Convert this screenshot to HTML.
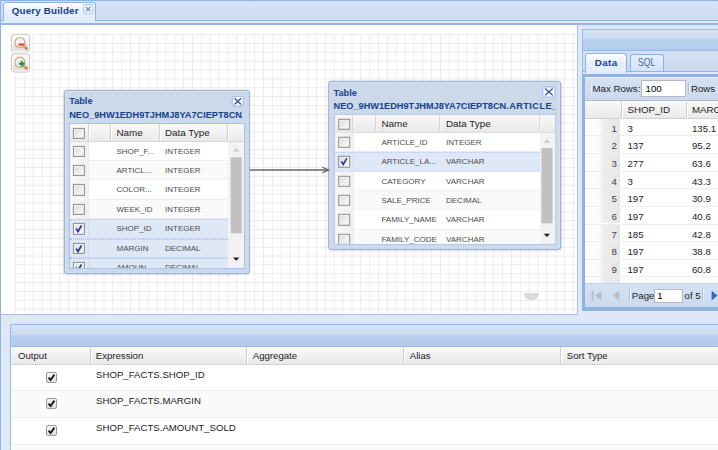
<!DOCTYPE html>
<html>
<head>
<meta charset="utf-8">
<title>Query Builder</title>
<style>
html,body{margin:0;padding:0;}
body{width:718px;height:450px;overflow:hidden;background:#dfe8f6;position:relative;font-family:"Liberation Sans",Arial,sans-serif;font-size:9.7px;color:#333;}
.abs{position:absolute;}
div{box-sizing:border-box;}
span{white-space:nowrap;}
/* top tab strip */
#strip{left:0;top:0;width:718px;height:25px;background:linear-gradient(#d5e2f4,#ccdbef);border-top:1px solid #8db2e3;}
#stripline{left:0;top:20.3px;width:718px;height:1px;background:#8db2e3;}
#stripspacer{left:0;top:21.3px;width:718px;height:2px;background:#deecfd;}
#stripbottom{left:0;top:23.1px;width:718px;height:1.7px;background:#94b6e5;}
#maintab{left:3.4px;top:2.1px;width:93px;height:19.3px;border:1px solid #8db2e3;border-bottom:none;border-radius:3px 3px 0 0;background:linear-gradient(#ffffff,#e6f0fd 45%,#deecfd);}
#maintab .t{left:7.3px;top:2.4px;font-weight:bold;font-size:9.8px;letter-spacing:0.17px;color:#15428b;line-height:12px;}
#leftborder{left:0;top:0;width:1.4px;height:450px;background:#8db2e3;}
/* canvas */
#canvas{left:1.4px;top:24.8px;width:576.5px;height:289.8px;background:#fff;border-right:1px solid #a3c1ea;border-bottom:1px solid #a3c1ea;}
.zbtn{left:11.1px;width:18.3px;height:18.4px;border:1px solid #bdbdbd;border-radius:3px;background:linear-gradient(#f7f7f7 0,#f3f3f3 55%,#dfdfdf 56%,#e3e3e3 100%);box-shadow:0 0 0 1px #fff;}
/* table windows */
.win{background:#ccd9ea;border:1px solid #98aed1;border-radius:3px;box-shadow:inset 0 0 0 1px #d9e3f1,0 1px 2px rgba(0,0,0,.13);}
.win .ttl{left:4.3px;font-weight:bold;font-size:9.2px;color:#15428b;line-height:12px;overflow:hidden;}
.win .close{width:12.4px;height:11px;background:#fff;border:1px solid #a6c2ea;border-radius:2px;}
.tg{background:#fff;border:1px solid #a0bee9;overflow:hidden;}
.tg .hd{left:0;top:0;height:17.7px;background:linear-gradient(#f9f9f9,#e9e9e9);border-bottom:1px solid #d0d0d0;}
.tg .hd span{position:absolute;top:0;line-height:17.4px;font-size:9.85px;color:#222;}
.tg .sep{top:0;width:2px;height:17px;border-left:1px solid #d0d0d0;border-right:1px solid #fff;}
.row{left:0;height:19.4px;border-bottom:1px solid #ededed;border-top:1px solid #fff;}
.row.alt{background:#fafafa;border-top-color:#fafafa;}
.row.sel{background:#dfe8f6;border-top:1px dotted #aac0ea;border-bottom:1px dotted #aac0ea;}
.row span{position:absolute;top:0;line-height:17.6px;font-size:8px;color:#4c4c4c;}
.row .ckc{left:0;top:-1px;width:19.4px;height:19.4px;background:linear-gradient(to right,#f8f8f8,#f0f0f0);border-right:1px solid #ececec;}
.row.sel .ckc{background:transparent;border-right-color:#d3dcec;}
.cb{left:3.4px;top:4px;width:11.4px;height:11.4px;border:1px solid #8c8c8c;background:linear-gradient(135deg,#cfcfcf,#ececec 50%,#fdfdfd);box-shadow:inset 0 0 0 1.5px #f1f1f1;}
.hd .cb{top:4px;}
.cb svg{position:absolute;left:0;top:0;}
.sb{background:#f2f2f2;}
.thumb{background:#c1c1c1;}
/* right panel */
.phd{background:linear-gradient(#d5e3f5 0,#cadbf3 45%,#b9d0ef 48%,#b2cbed 100%);border:1px solid #99bbe8;}
.tab2{border:1px solid #8db2e3;border-bottom:none;border-radius:3px 3px 0 0;}
.tab2 span{position:absolute;line-height:12px;}
.tbar{background:linear-gradient(#d6e2f3,#cbd9ee);}
.tbar span{position:absolute;line-height:12px;font-size:9.7px;color:#222;}
.inp{background:#fff;border:1px solid #b5b8c8;}
.inp span{left:2.5px;top:1.5px;color:#000;}
.tsep{width:2px;border-left:1px solid #9dbdea;border-right:1px solid #f4f8fd;}
.ghd{background:linear-gradient(#f9f9f9,#e9e9e9);border-bottom:1px solid #d0d0d0;}
.ghd span{position:absolute;top:0;line-height:18px;font-size:9.7px;color:#222;}
.gr{left:0;width:200px;height:17.64px;border-bottom:1px solid #ededed;background:#fff;}
.gr .n{left:0;top:0;width:35.3px;height:16.6px;background:linear-gradient(to right,#fff 0,#fbfbfb 40%,#eeeeee 50%,#e6e6e6 100%);}
.gr span{position:absolute;top:0;line-height:19px;font-size:9.7px;color:#222;}
/* bottom panel */
.brow{left:0;width:710px;height:26.55px;border-bottom:1px solid #ededed;background:#fff;}
.brow.alt{background:#fafafa;}
.brow span{position:absolute;left:85.1px;top:3.9px;line-height:12px;font-size:9.63px;color:#222;}
.ccb{left:35.2px;top:7px;width:10.6px;height:10.8px;border:1px solid #9a9a9a;border-radius:2px;background:linear-gradient(#f6f6f6,#dedede);}

</style>
</head>
<body>
<!-- top tab strip -->
<div id="strip" class="abs"></div>
<div id="stripline" class="abs"></div>
<div id="stripspacer" class="abs"></div>
<div id="stripbottom" class="abs"></div>
<div id="maintab" class="abs"><span class="abs t">Query Builder</span>
 <svg class="abs" style="left:79px;top:1.2px" width="11" height="11" viewBox="0 0 11 11"><rect x="0.5" y="0.5" width="9.4" height="9.4" rx="2" fill="#eef4fd" stroke="#a9c4ec"/><path d="M3 3 L7.4 7.4 M7.4 3 L3 7.4" stroke="#6d8fc4" stroke-width="1.3"/></svg>
</div>
<!-- canvas -->
<div id="canvas" class="abs"></div>
<svg class="abs" style="left:0;top:0" width="578" height="315" viewBox="0 0 578 315">
<g stroke="#ececec" stroke-width="1">
<line x1="15.40" y1="74.20" x2="15.40" y2="314.3"/>
<line x1="24.26" y1="74.20" x2="24.26" y2="314.3"/>
<line x1="33.11" y1="34.10" x2="33.11" y2="314.3"/>
<line x1="41.97" y1="34.10" x2="41.97" y2="314.3"/>
<line x1="50.83" y1="34.10" x2="50.83" y2="314.3"/>
<line x1="59.68" y1="34.10" x2="59.68" y2="314.3"/>
<line x1="68.54" y1="34.10" x2="68.54" y2="314.3"/>
<line x1="77.40" y1="34.10" x2="77.40" y2="314.3"/>
<line x1="86.26" y1="34.10" x2="86.26" y2="314.3"/>
<line x1="95.11" y1="34.10" x2="95.11" y2="314.3"/>
<line x1="103.97" y1="34.10" x2="103.97" y2="314.3"/>
<line x1="112.83" y1="34.10" x2="112.83" y2="314.3"/>
<line x1="121.68" y1="34.10" x2="121.68" y2="314.3"/>
<line x1="130.54" y1="34.10" x2="130.54" y2="314.3"/>
<line x1="139.40" y1="34.10" x2="139.40" y2="314.3"/>
<line x1="148.25" y1="34.10" x2="148.25" y2="314.3"/>
<line x1="157.11" y1="34.10" x2="157.11" y2="314.3"/>
<line x1="165.97" y1="34.10" x2="165.97" y2="314.3"/>
<line x1="174.83" y1="34.10" x2="174.83" y2="314.3"/>
<line x1="183.68" y1="34.10" x2="183.68" y2="314.3"/>
<line x1="192.54" y1="34.10" x2="192.54" y2="314.3"/>
<line x1="201.40" y1="34.10" x2="201.40" y2="314.3"/>
<line x1="210.25" y1="34.10" x2="210.25" y2="314.3"/>
<line x1="219.11" y1="34.10" x2="219.11" y2="314.3"/>
<line x1="227.97" y1="34.10" x2="227.97" y2="314.3"/>
<line x1="236.82" y1="34.10" x2="236.82" y2="314.3"/>
<line x1="245.68" y1="34.10" x2="245.68" y2="314.3"/>
<line x1="254.54" y1="34.10" x2="254.54" y2="314.3"/>
<line x1="263.40" y1="34.10" x2="263.40" y2="314.3"/>
<line x1="272.25" y1="34.10" x2="272.25" y2="314.3"/>
<line x1="281.11" y1="34.10" x2="281.11" y2="314.3"/>
<line x1="289.97" y1="34.10" x2="289.97" y2="314.3"/>
<line x1="298.82" y1="34.10" x2="298.82" y2="314.3"/>
<line x1="307.68" y1="34.10" x2="307.68" y2="314.3"/>
<line x1="316.54" y1="34.10" x2="316.54" y2="314.3"/>
<line x1="325.39" y1="34.10" x2="325.39" y2="314.3"/>
<line x1="334.25" y1="34.10" x2="334.25" y2="314.3"/>
<line x1="343.11" y1="34.10" x2="343.11" y2="314.3"/>
<line x1="351.97" y1="34.10" x2="351.97" y2="314.3"/>
<line x1="360.82" y1="34.10" x2="360.82" y2="314.3"/>
<line x1="369.68" y1="34.10" x2="369.68" y2="314.3"/>
<line x1="378.54" y1="34.10" x2="378.54" y2="314.3"/>
<line x1="387.39" y1="34.10" x2="387.39" y2="314.3"/>
<line x1="396.25" y1="34.10" x2="396.25" y2="314.3"/>
<line x1="405.11" y1="34.10" x2="405.11" y2="314.3"/>
<line x1="413.96" y1="34.10" x2="413.96" y2="314.3"/>
<line x1="422.82" y1="34.10" x2="422.82" y2="314.3"/>
<line x1="431.68" y1="34.10" x2="431.68" y2="314.3"/>
<line x1="440.54" y1="34.10" x2="440.54" y2="314.3"/>
<line x1="449.39" y1="34.10" x2="449.39" y2="314.3"/>
<line x1="458.25" y1="34.10" x2="458.25" y2="314.3"/>
<line x1="467.11" y1="34.10" x2="467.11" y2="314.3"/>
<line x1="475.96" y1="34.10" x2="475.96" y2="314.3"/>
<line x1="484.82" y1="34.10" x2="484.82" y2="314.3"/>
<line x1="493.68" y1="34.10" x2="493.68" y2="314.3"/>
<line x1="502.53" y1="34.10" x2="502.53" y2="314.3"/>
<line x1="511.39" y1="34.10" x2="511.39" y2="314.3"/>
<line x1="520.25" y1="34.10" x2="520.25" y2="314.3"/>
<line x1="529.11" y1="34.10" x2="529.11" y2="314.3"/>
<line x1="537.96" y1="34.10" x2="537.96" y2="314.3"/>
<line x1="546.82" y1="34.10" x2="546.82" y2="314.3"/>
<line x1="555.68" y1="34.10" x2="555.68" y2="314.3"/>
<line x1="564.53" y1="34.10" x2="564.53" y2="314.3"/>
<line x1="573.39" y1="34.10" x2="573.39" y2="314.3"/>
<line x1="33.00" y1="34.60" x2="577.0" y2="34.60"/>
<line x1="33.00" y1="43.46" x2="577.0" y2="43.46"/>
<line x1="33.00" y1="52.31" x2="577.0" y2="52.31"/>
<line x1="33.00" y1="61.17" x2="577.0" y2="61.17"/>
<line x1="33.00" y1="70.03" x2="577.0" y2="70.03"/>
<line x1="14.40" y1="78.88" x2="577.0" y2="78.88"/>
<line x1="14.40" y1="87.74" x2="577.0" y2="87.74"/>
<line x1="14.40" y1="96.60" x2="577.0" y2="96.60"/>
<line x1="14.40" y1="105.46" x2="577.0" y2="105.46"/>
<line x1="14.40" y1="114.31" x2="577.0" y2="114.31"/>
<line x1="14.40" y1="123.17" x2="577.0" y2="123.17"/>
<line x1="14.40" y1="132.03" x2="577.0" y2="132.03"/>
<line x1="14.40" y1="140.88" x2="577.0" y2="140.88"/>
<line x1="14.40" y1="149.74" x2="577.0" y2="149.74"/>
<line x1="14.40" y1="158.60" x2="577.0" y2="158.60"/>
<line x1="14.40" y1="167.45" x2="577.0" y2="167.45"/>
<line x1="14.40" y1="176.31" x2="577.0" y2="176.31"/>
<line x1="14.40" y1="185.17" x2="577.0" y2="185.17"/>
<line x1="14.40" y1="194.03" x2="577.0" y2="194.03"/>
<line x1="14.40" y1="202.88" x2="577.0" y2="202.88"/>
<line x1="14.40" y1="211.74" x2="577.0" y2="211.74"/>
<line x1="14.40" y1="220.60" x2="577.0" y2="220.60"/>
<line x1="14.40" y1="229.45" x2="577.0" y2="229.45"/>
<line x1="14.40" y1="238.31" x2="577.0" y2="238.31"/>
<line x1="14.40" y1="247.17" x2="577.0" y2="247.17"/>
<line x1="14.40" y1="256.02" x2="577.0" y2="256.02"/>
<line x1="14.40" y1="264.88" x2="577.0" y2="264.88"/>
<line x1="14.40" y1="273.74" x2="577.0" y2="273.74"/>
<line x1="14.40" y1="282.60" x2="577.0" y2="282.60"/>
<line x1="14.40" y1="291.45" x2="577.0" y2="291.45"/>
<line x1="14.40" y1="300.31" x2="577.0" y2="300.31"/>
<line x1="14.40" y1="309.17" x2="577.0" y2="309.17"/>
</g></svg>
<div id="leftborder" class="abs"></div>
<!-- zoom buttons -->
<svg class="abs" style="left:9px;top:32px" width="23" height="44" viewBox="0 0 23 44">
 <defs><linearGradient id="zb" x1="0" y1="0" x2="0" y2="1"><stop offset="0" stop-color="#f8f8f8"/><stop offset="0.61" stop-color="#f2f2f2"/><stop offset="0.62" stop-color="#dddddd"/><stop offset="1" stop-color="#e4e4e4"/></linearGradient></defs>
<g transform="translate(0 0)">
 <rect x="0.8" y="0.8" width="21" height="21" rx="4" fill="#fff"/>
 <rect x="2.3" y="2.3" width="18.1" height="18.1" rx="3" fill="#fff" stroke="#c2c2c2" stroke-width="1"/>
 <rect x="3.6" y="3.6" width="15.5" height="15.5" rx="1.5" fill="url(#zb)"/>
 <circle cx="10.9" cy="10.5" r="5" fill="#eef3f9" stroke="#d4a870" stroke-width="1.2"/>
 <path d="M14.6 14.4 L17.2 16.4" stroke="#d9b262" stroke-width="2.6" stroke-linecap="round"/>
 <path d="M16.8 16.1 L17.5 16.7" stroke="#b9873a" stroke-width="2.4" stroke-linecap="round"/>
 <rect x="9.5" y="11.3" width="6.4" height="2.5" fill="#e63c46" stroke="#f4a0a6" stroke-width="0.6"/>
</g>
<g transform="translate(0 19.7)">
 <rect x="0.8" y="0.8" width="21" height="21" rx="4" fill="#fff"/>
 <rect x="2.3" y="2.3" width="18.1" height="18.1" rx="3" fill="#fff" stroke="#c2c2c2" stroke-width="1"/>
 <rect x="3.6" y="3.6" width="15.5" height="15.5" rx="1.5" fill="url(#zb)"/>
 <circle cx="10.9" cy="10.5" r="5" fill="#eef3f9" stroke="#d4a870" stroke-width="1.2"/>
 <path d="M14.6 14.4 L17.2 16.4" stroke="#d9b262" stroke-width="2.6" stroke-linecap="round"/>
 <path d="M16.8 16.1 L17.5 16.7" stroke="#b9873a" stroke-width="2.4" stroke-linecap="round"/>
 <path d="M12.9 9.1 V15.1 M9.9 12.1 H15.9" stroke="#4aa35a" stroke-width="2.4"/><path d="M12.9 9.9 V14.3 M10.7 12.1 H15.1" stroke="#2f8a40" stroke-width="1.1"/>
</g>
</svg>

<!-- table windows -->
<div class="abs win" style="left:63px;top:89px;width:186.2px;height:183.9px;transform:translate(0.90px,0.90px)">
 <span class="abs ttl" style="top:4.2px">Table</span>
 <span class="abs ttl" style="top:18.2px;width:174.2px">NEO_9HW1EDH9TJHMJ8YA7CIEPT8CN.SHOP_FACTS</span>
 <svg class="abs" style="left:166px;top:5px" width="16" height="14" viewBox="0 0 16 14"><g transform="translate(0.70 0.00)"><rect x="0.6" y="0.6" width="11.20" height="9.60" rx="1.8" fill="#f7faff" stroke="#a3bfea" stroke-width="1.2"/><path d="M2.90 2.30 L9.50 8.50 M9.50 2.30 L2.90 8.50" stroke="#3b55a8" stroke-width="1.35"/></g></svg>
 <div class="abs tg" style="left:4px;top:32px;width:175.7px;height:145.6px">
  <div class="abs hd" style="width:173.7px;height:17.6px">
   <div class="abs cb"></div>
   <div class="abs sep" style="left:18.0px"></div>
   <div class="abs sep" style="left:40.3px"></div>
   <div class="abs sep" style="left:89.1px"></div>
   <div class="abs sep" style="left:157.4px"></div>
   <span style="left:46.6px">Name</span><span style="left:95.1px">Data Type</span>
  </div>
  <div class="abs row" style="top:17.60px;width:158.4px;height:19.40px">
   <div class="abs ckc"><div class="abs cb"></div></div><span style="left:46.6px">SHOP_F...</span><span style="left:95.1px">INTEGER</span>
  </div>
  <div class="abs row alt" style="top:37.00px;width:158.4px;height:19.40px">
   <div class="abs ckc"><div class="abs cb"></div></div><span style="left:46.6px">ARTICL...</span><span style="left:95.1px">INTEGER</span>
  </div>
  <div class="abs row" style="top:56.40px;width:158.4px;height:19.40px">
   <div class="abs ckc"><div class="abs cb"></div></div><span style="left:46.6px">COLOR...</span><span style="left:95.1px">INTEGER</span>
  </div>
  <div class="abs row alt" style="top:75.80px;width:158.4px;height:19.40px">
   <div class="abs ckc"><div class="abs cb"></div></div><span style="left:46.6px">WEEK_ID</span><span style="left:95.1px">INTEGER</span>
  </div>
  <div class="abs row sel" style="top:95.20px;width:158.4px;height:19.40px">
   <div class="abs ckc"><div class="abs cb"><svg width="10" height="10" viewBox="0 0 10 10"><path d="M2.2 4.6 L4.1 7.6 L7.6 1.6" fill="none" stroke="#26399a" stroke-width="1.7"/></svg></div></div><span style="left:46.6px">SHOP_ID</span><span style="left:95.1px">INTEGER</span>
  </div>
  <div class="abs row sel" style="top:114.60px;width:158.4px;height:19.40px">
   <div class="abs ckc"><div class="abs cb"><svg width="10" height="10" viewBox="0 0 10 10"><path d="M2.2 4.6 L4.1 7.6 L7.6 1.6" fill="none" stroke="#26399a" stroke-width="1.7"/></svg></div></div><span style="left:46.6px">MARGIN</span><span style="left:95.1px">DECIMAL</span>
  </div>
  <div class="abs row sel" style="top:134.00px;width:158.4px;height:19.40px">
   <div class="abs ckc"><div class="abs cb"><svg width="10" height="10" viewBox="0 0 10 10"><path d="M2.2 4.6 L4.1 7.6 L7.6 1.6" fill="none" stroke="#26399a" stroke-width="1.7"/></svg></div></div><span style="left:46.6px">AMOUN...</span><span style="left:95.1px">DECIMAL</span>
  </div>
  <div class="abs sb" style="left:158.4px;top:17.6px;width:16.3px;height:145.6px"></div>
  <svg class="abs" style="left:158px;top:17px" width="18" height="146" viewBox="0 0 18 146"><g transform="translate(-227.90 -140.90)">
   <rect x="230.70" y="157.30" width="11.00" height="76.00" fill="#c1c1c1"/>
   <path d="M236.20 148.30 l3.1 3.2 h-6.2 Z" fill="#c6c6c6"/>
   <path d="M236.20 260.70 l3.1 -3.2 h-6.2 Z" fill="#1a1a1a"/>
  </g></svg>
 </div>
</div>
<div class="abs win" style="left:328px;top:80px;width:232.5px;height:169.0px;transform:translate(0.20px,0.80px)">
 <span class="abs ttl" style="top:5.0px">Table</span>
 <span class="abs ttl" style="top:18.1px;width:222.2px">NEO_9HW1EDH9TJHMJ8YA7CIEPT8CN<span style="letter-spacing:0.42px">.ARTICLE_LOOKUP</span></span>
 <svg class="abs" style="left:213px;top:4px" width="16" height="14" viewBox="0 0 16 14"><g transform="translate(0.00 0.40)"><rect x="0.6" y="0.6" width="12.20" height="10.20" rx="1.8" fill="#f7faff" stroke="#a3bfea" stroke-width="1.2"/><path d="M2.90 2.30 L10.50 9.10 M10.50 2.30 L2.90 9.10" stroke="#3b55a8" stroke-width="1.35"/></g></svg>
 <div class="abs tg" style="left:5px;top:32px;width:221.6px;height:131.0px">
  <div class="abs hd" style="width:219.6px;height:17.9px">
   <div class="abs cb"></div>
   <div class="abs sep" style="left:17.4px"></div>
   <div class="abs sep" style="left:39.8px"></div>
   <div class="abs sep" style="left:103.9px"></div>
   <div class="abs sep" style="left:203.7px"></div>
   <span style="left:46.2px">Name</span><span style="left:110.8px">Data Type</span>
  </div>
  <div class="abs row" style="top:17.90px;width:204.7px;height:19.33px">
   <div class="abs ckc"><div class="abs cb"></div></div><span style="left:46.2px">ARTICLE_ID</span><span style="left:110.8px">INTEGER</span>
  </div>
  <div class="abs row sel" style="top:37.23px;width:204.7px;height:19.33px">
   <div class="abs ckc"><div class="abs cb"><svg width="10" height="10" viewBox="0 0 10 10"><path d="M2.2 4.6 L4.1 7.6 L7.6 1.6" fill="none" stroke="#26399a" stroke-width="1.7"/></svg></div></div><span style="left:46.2px">ARTICLE_LA...</span><span style="left:110.8px">VARCHAR</span>
  </div>
  <div class="abs row" style="top:56.56px;width:204.7px;height:19.33px">
   <div class="abs ckc"><div class="abs cb"></div></div><span style="left:46.2px">CATEGORY</span><span style="left:110.8px">VARCHAR</span>
  </div>
  <div class="abs row alt" style="top:75.89px;width:204.7px;height:19.33px">
   <div class="abs ckc"><div class="abs cb"></div></div><span style="left:46.2px">SALE_PRICE</span><span style="left:110.8px">DECIMAL</span>
  </div>
  <div class="abs row" style="top:95.22px;width:204.7px;height:19.33px">
   <div class="abs ckc"><div class="abs cb"></div></div><span style="left:46.2px">FAMILY_NAME</span><span style="left:110.8px">VARCHAR</span>
  </div>
  <div class="abs row alt" style="top:114.55px;width:204.7px;height:19.33px">
   <div class="abs ckc"><div class="abs cb"></div></div><span style="left:46.2px">FAMILY_CODE</span><span style="left:110.8px">VARCHAR</span>
  </div>
  <div class="abs row" style="top:133.88px;width:204.7px;height:19.33px">
   <div class="abs ckc"><div class="abs cb"></div></div><span style="left:46.2px">LINE_NAME</span><span style="left:110.8px">VARCHAR</span>
  </div>
  <div class="abs sb" style="left:204.7px;top:17.9px;width:15.9px;height:131.0px"></div>
  <svg class="abs" style="left:204px;top:17px" width="18" height="131" viewBox="0 0 18 131"><g transform="translate(-539.20 -131.80)">
   <rect x="541.40" y="148.00" width="11.10" height="75.30" fill="#c1c1c1"/>
   <path d="M546.90 139.60 l3.1 3.2 h-6.2 Z" fill="#c6c6c6"/>
   <path d="M546.90 236.90 l3.1 -3.2 h-6.2 Z" fill="#1a1a1a"/>
  </g></svg>
 </div>
</div>
<svg class="abs" style="left:250px;top:160px" width="80" height="20" viewBox="0 0 80 20"><path d="M0 10 H78.4" stroke="#646464" stroke-width="1.5" fill="none"/><path d="M72.4 7.2 L78.6 10 L72.4 12.8" stroke="#555" stroke-width="1.1" fill="none"/></svg>
<svg class="abs" style="left:522px;top:292px" width="18" height="10" viewBox="0 0 18 10"><path d="M1.8 1 H16.9 A7.55 7.55 0 0 1 1.8 1 Z" fill="#dadada"/></svg>

<!-- right panel -->
<div class="abs phd" style="left:582px;top:28.7px;width:140px;height:22.6px"></div>
<div class="abs" style="left:583px;top:51.3px;width:140px;height:21px;background:linear-gradient(#d4e1f4,#cbdaf0)"></div>
<div class="abs" style="left:583px;top:71.3px;width:140px;height:1px;background:#8db2e3"></div>
<div class="abs" style="left:583px;top:72.3px;width:140px;height:2px;background:#deecfd"></div>
<div class="abs" style="left:582px;top:51px;width:1px;height:259.7px;background:#99bbe8"></div>
<div class="abs" style="left:582px;top:74.2px;width:140px;height:236.5px;background:#8db2e3"></div>
<div class="abs tab2" style="left:585.4px;top:53.4px;width:41.2px;height:20px;background:linear-gradient(#fff,#e6f0fd 45%,#deecfd)"><span style="left:8.3px;top:3px;font-weight:bold;font-size:9.8px;letter-spacing:0.4px;color:#15428b">Data</span></div>
<div class="abs tab2" style="left:629.8px;top:54.2px;width:34.4px;height:17.3px;background:linear-gradient(#e4eefb,#d3e2f6)"><span style="left:7.2px;top:2.2px;font-size:10.1px;color:#416aa3;display:inline-block;transform-origin:0 50%;transform:scaleX(0.86)">SQL</span></div>
<div class="abs tbar" style="left:585.2px;top:77px;width:140px;height:23.6px;border-top:1px solid #f0f5fc;border-bottom:1px solid #a9bfd3">
 <div class="abs tsep" style="left:4.6px;top:4px;height:12px;border-left-color:#c3d6f0"></div>
 <span style="left:7.3px;top:5px">Max Rows:</span>
 <div class="abs inp" style="left:56px;top:2.4px;width:44.5px;height:16.6px"><span style="left:3.4px">100</span></div>
 <div class="abs tsep" style="left:102.7px;top:4px;height:12px"></div>
 <span style="left:105.8px;top:5px">Rows</span>
</div>
<div class="abs" style="left:585.2px;top:100.5px;width:140px;height:182.6px;background:#fff;overflow:hidden">
 <div class="abs ghd" style="left:0;top:0;width:140px;height:18.2px">
  <div class="abs" style="left:35.6px;top:0;width:2px;height:18px;border-left:1px solid #d0d0d0;border-right:1px solid #fff"></div>
  <div class="abs" style="left:100.6px;top:0;width:2px;height:18px;border-left:1px solid #d0d0d0;border-right:1px solid #fff"></div>
  <span style="left:42.3px">SHOP_ID</span><span style="left:106.8px">MARGIN</span>
 </div>
 <div class="abs gr" style="top:18.20px"><div class="abs n"></div><span style="left:0;width:31.6px;text-align:right;color:#444">1</span><span style="left:42.3px">3</span><span style="left:106.8px">135.1</span></div>
 <div class="abs gr" style="top:35.84px"><div class="abs n"></div><span style="left:0;width:31.6px;text-align:right;color:#444">2</span><span style="left:42.3px">137</span><span style="left:106.8px">95.2</span></div>
 <div class="abs gr" style="top:53.48px"><div class="abs n"></div><span style="left:0;width:31.6px;text-align:right;color:#444">3</span><span style="left:42.3px">277</span><span style="left:106.8px">63.6</span></div>
 <div class="abs gr" style="top:71.12px"><div class="abs n"></div><span style="left:0;width:31.6px;text-align:right;color:#444">4</span><span style="left:42.3px">3</span><span style="left:106.8px">43.3</span></div>
 <div class="abs gr" style="top:88.76px"><div class="abs n"></div><span style="left:0;width:31.6px;text-align:right;color:#444">5</span><span style="left:42.3px">197</span><span style="left:106.8px">30.9</span></div>
 <div class="abs gr" style="top:106.40px"><div class="abs n"></div><span style="left:0;width:31.6px;text-align:right;color:#444">6</span><span style="left:42.3px">197</span><span style="left:106.8px">40.6</span></div>
 <div class="abs gr" style="top:124.04px"><div class="abs n"></div><span style="left:0;width:31.6px;text-align:right;color:#444">7</span><span style="left:42.3px">185</span><span style="left:106.8px">42.8</span></div>
 <div class="abs gr" style="top:141.68px"><div class="abs n"></div><span style="left:0;width:31.6px;text-align:right;color:#444">8</span><span style="left:42.3px">197</span><span style="left:106.8px">38.8</span></div>
 <div class="abs gr" style="top:159.32px"><div class="abs n"></div><span style="left:0;width:31.6px;text-align:right;color:#444">9</span><span style="left:42.3px">197</span><span style="left:106.8px">60.8</span></div>
 <div class="abs gr" style="top:176.96px"><div class="abs n"></div><span style="left:0;width:31.6px;text-align:right;color:#444"></span><span style="left:42.3px"></span><span style="left:106.8px"></span></div>
</div>
<div class="abs tbar" style="left:585.2px;top:283px;width:140px;height:24.2px;border-top:1px solid #c3d2e6">
 <svg class="abs" style="left:5px;top:4.5px" width="14" height="14" viewBox="0 0 14 14"><rect x="1.6" y="1.6" width="2" height="10" fill="#b9bcc4"/><path d="M11.4 1.8 V11.4 L5 6.6 Z" fill="#b9bcc4"/></svg>
 <svg class="abs" style="left:24.5px;top:4.5px" width="12" height="14" viewBox="0 0 12 14"><path d="M9.2 1.8 V11.4 L2.8 6.6 Z" fill="#b9bcc4"/></svg>
 <div class="abs tsep" style="left:43.8px;top:5px;height:12px"></div>
 <span style="left:46.6px;top:6px">Page</span>
 <div class="abs inp" style="left:68.6px;top:5px;width:29.6px;height:14px"><span style="top:-0.5px;left:2.5px">1</span></div>
 <span style="left:99.4px;top:6px">of 5</span>
 <div class="abs tsep" style="left:116.6px;top:5px;height:12px"></div>
 <svg class="abs" style="left:123px;top:4.5px" width="12" height="14" viewBox="0 0 12 14"><path d="M3.6 1.8 V11.4 L9.4 6.6 Z" fill="#2f63c8"/></svg>
</div>

<!-- bottom panel -->
<div class="abs phd" style="left:10px;top:324.4px;width:720px;height:22.4px"></div>
<div class="abs" style="left:10px;top:346px;width:1.3px;height:110px;background:#99bbe8"></div>
<div class="abs" style="left:11px;top:346.5px;width:710px;height:110px;background:#fff;overflow:hidden">
 <div class="abs ghd" style="left:0;top:0;width:710px;height:18.4px">
  <div class="abs" style="left:78.5px;top:0;width:2px;height:17px;border-left:1px solid #d0d0d0;border-right:1px solid #fff"></div>
  <div class="abs" style="left:234.9px;top:0;width:2px;height:17px;border-left:1px solid #d0d0d0;border-right:1px solid #fff"></div>
  <div class="abs" style="left:392px;top:0;width:2px;height:17px;border-left:1px solid #d0d0d0;border-right:1px solid #fff"></div>
  <div class="abs" style="left:549px;top:0;width:2px;height:17px;border-left:1px solid #d0d0d0;border-right:1px solid #fff"></div>
  <span style="left:7px;font-size:9.6px">Output</span>
  <span style="left:84.8px;font-size:9.6px">Expression</span>
  <span style="left:241.8px;font-size:9.6px">Aggregate</span>
  <span style="left:398.8px;font-size:9.6px">Alias</span>
  <span style="left:555.8px;font-size:9.6px">Sort Type</span>
 </div>
 <div class="abs brow" style="top:18.40px"><div class="abs ccb"><svg class="abs" style="left:0;top:0" width="9" height="9" viewBox="0 0 9 9"><path d="M1.6 4.6 L3.6 7 L7.4 1.6" fill="none" stroke="#1a1a1a" stroke-width="1.9"/></svg></div><span>SHOP_FACTS.SHOP_ID</span></div>
 <div class="abs brow alt" style="top:44.95px"><div class="abs ccb"><svg class="abs" style="left:0;top:0" width="9" height="9" viewBox="0 0 9 9"><path d="M1.6 4.6 L3.6 7 L7.4 1.6" fill="none" stroke="#1a1a1a" stroke-width="1.9"/></svg></div><span>SHOP_FACTS.MARGIN</span></div>
 <div class="abs brow" style="top:71.50px"><div class="abs ccb"><svg class="abs" style="left:0;top:0" width="9" height="9" viewBox="0 0 9 9"><path d="M1.6 4.6 L3.6 7 L7.4 1.6" fill="none" stroke="#1a1a1a" stroke-width="1.9"/></svg></div><span>SHOP_FACTS.AMOUNT_SOLD</span></div>
 <div class="abs brow alt" style="top:98.05px"><span></span></div>
</div>

</body>
</html>
